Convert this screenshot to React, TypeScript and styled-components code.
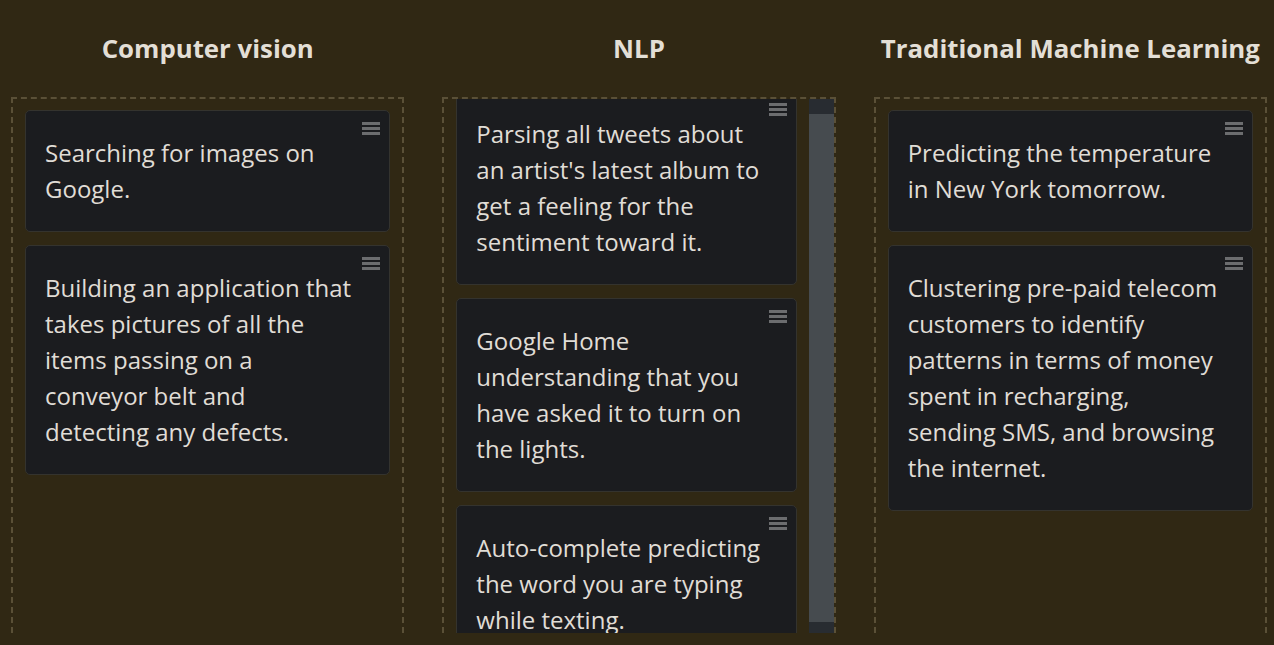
import React, { useLayoutEffect, useRef } from "react";
import styled, { createGlobalStyle } from "styled-components";

const Global = createGlobalStyle`
  html, body { margin: 0; padding: 0; background: #302814; }
  body { font-family: "Open Sans", sans-serif; overflow: hidden; }
  * { box-sizing: border-box; }
`;

const Board = styled.div`
  display: grid;
  grid-template-columns: repeat(3, 1fr);
  column-gap: 38px;
  padding: 0 7px 0 11px;
  height: 645px;
`;

const Column = styled.section`
  display: flex;
  flex-direction: column;
  min-width: 0;
`;

const Title = styled.h2`
  margin: 31px 0 32px;
  height: 34px;
  line-height: 34px;
  text-align: center;
  font-family: "Open Sans", sans-serif;
  font-weight: 700;
  font-size: 25.8px;
  color: #e3dfd6;
  white-space: nowrap;
`;

const Lane = styled.div`
  height: 536px;
  border: 2px dashed #5a5037;
  border-bottom: none;
  display: flex;
  min-height: 0;
`;

const Scroller = styled.div`
  flex: 1;
  min-width: 0;
  min-height: 0;
  overflow: hidden;
  padding: 11px 12px 0 12px;
  display: flex;
  flex-direction: column;
  gap: 13px;
`;

const Track = styled.div`
  flex: none;
  width: 25px;
  background: #282c31;
  padding: 15px 0 11px;
  display: flex;
`;

const Thumb = styled.div`
  flex: 1;
  background: #464b4f;
`;

const Card = styled.article`
  flex: none;
  display: flex;
  flex-direction: column;
  background: #1b1c1f;
  border: 1px solid #34332e;
  border-radius: 5px;
  padding: 10px 9px 24px 19px;
`;

const Handle = styled.div`
  align-self: flex-end;
  width: 18px;
  height: 14px;
  display: flex;
  flex-direction: column;
  justify-content: space-between;
  padding-top: 1px;

  span {
    display: block;
    height: 3px;
    background: #6c6d6f;
  }
`;

const Text = styled.p`
  margin: 0;
  font-family: "Open Sans", sans-serif;
  font-size: 24px;
  font-weight: 500;
  line-height: 36px;
  color: #e0ddd6;
  white-space: nowrap;
`;

type Col = { title: string; scroll?: boolean; items: string[][] };

const columns: Col[] = [
  {
    title: "Computer vision",
    items: [
      ["Searching for images on", "Google."],
      [
        "Building an application that",
        "takes pictures of all the",
        "items passing on a",
        "conveyor belt and",
        "detecting any defects.",
      ],
    ],
  },
  {
    title: "NLP",
    scroll: true,
    items: [
      [
        "Parsing all tweets about",
        "an artist's latest album to",
        "get a feeling for the",
        "sentiment toward it.",
      ],
      [
        "Google Home",
        "understanding that you",
        "have asked it to turn on",
        "the lights.",
      ],
      ["Auto-complete predicting", "the word you are typing", "while texting."],
    ],
  },
  {
    title: "Traditional Machine Learning",
    items: [
      ["Predicting the temperature", "in New York tomorrow."],
      [
        "Clustering pre-paid telecom",
        "customers to identify",
        "patterns in terms of money",
        "spent in recharging,",
        "sending SMS, and browsing",
        "the internet.",
      ],
    ],
  },
];

function Lanes({ col }: { col: Col }) {
  const ref = useRef<HTMLDivElement>(null);
  useLayoutEffect(() => {
    if (col.scroll && ref.current) ref.current.scrollTop = 19;
  }, [col.scroll]);
  return (
    <Lane>
      <Scroller ref={ref}>
        {col.items.map((lines, i) => (
          <Card key={i}>
            <Handle>
              <span />
              <span />
              <span />
            </Handle>
            <Text>
              {lines.map((l, j) => (
                <React.Fragment key={j}>
                  {l}
                  {j < lines.length - 1 && <br />}
                </React.Fragment>
              ))}
            </Text>
          </Card>
        ))}
      </Scroller>
      {col.scroll && (
        <Track>
          <Thumb />
        </Track>
      )}
    </Lane>
  );
}

export default function App() {
  return (
    <>
      <Global />
      <Board>
        {columns.map((c) => (
          <Column key={c.title}>
            <Title>{c.title}</Title>
            <Lanes col={c} />
          </Column>
        ))}
      </Board>
    </>
  );
}
